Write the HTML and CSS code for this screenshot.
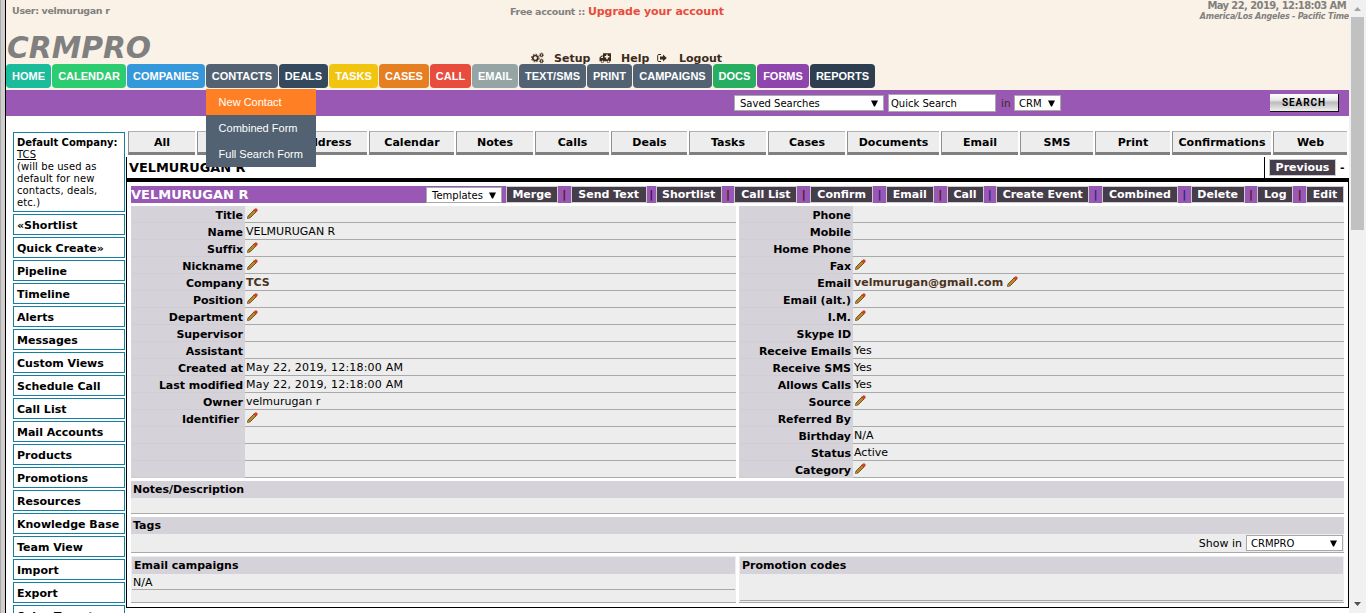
FILE: index.html
```html
<!DOCTYPE html>
<html lang="en">
<head>
<meta charset="utf-8">
<title>CRMPRO</title>
<link rel="stylesheet" href="styles.css">
</head>
<body>
<svg width="0" height="0" class="defs">
  <symbol id="pencil" viewBox="0 0 11 11">
    <path d="M.6 10.4 1.2 7.8 7.2 1.8 9.2 3.8 3.2 9.8Z" fill="#b8892b" stroke="#5f3a10" stroke-width=".8"/>
    <path d="M.6 10.4 1.1 8.4 2.6 9.9Z" fill="#e9cf9d" stroke="#5f3a10" stroke-width=".4"/>
    <path d="M6.9 2 8 .9Q9 .1 9.9 1 10.8 2 10.1 3L9 4.1Z" fill="#f03a1c" stroke="#a02412" stroke-width=".4"/>
  </symbol>
  <symbol id="caret" viewBox="0 0 8 8"><path d="M0 .5H8L4.6 7.5H3.4Z"/></symbol>
</svg>
<div class="page">
  <div class="edge"></div>
  <div class="content">
    <header class="header">
      <div class="topline">
        <div class="user">User: velmurugan r</div>
        <div class="account">Free account :: <a class="upgrade">Upgrade your account</a></div>
        <div class="clock"><div class="date">May 22, 2019, 12:18:03 AM</div><div class="zone">America/Los Angeles - Pacific Time</div></div>
      </div>
      <div class="brand">
        <div class="logo">CRMPRO</div>
        <div class="tools">
          <svg class="ic" width="13" height="12" viewBox="0 0 13 12"><g fill="none" stroke="#3d2b1c"><circle cx="4.3" cy="6" r="2.5" stroke-width="1.7"/><circle cx="4.3" cy="6" r="3.8" stroke-width="1" stroke-dasharray="1.6 1.38"/><circle cx="10.5" cy="3" r="1.3" stroke-width="1.1"/><circle cx="10.5" cy="9" r="1.3" stroke-width="1.1"/><circle cx="10.5" cy="3" r="2.1" stroke-width=".6" stroke-dasharray=".9 .75"/><circle cx="10.5" cy="9" r="2.1" stroke-width=".6" stroke-dasharray=".9 .75"/></g></svg>
          <a class="t1">Setup</a>
          <svg class="ic" width="12" height="12" viewBox="0 0 12 12"><path fill="#3d2b1c" fill-rule="evenodd" d="M4 1.2H12V9.3H11A1.6 1.6 0 0 1 7.8 9.3H5A1.6 1.6 0 0 1 1.8 9.3H.5V5.6L2.6 3.4H4ZM1.6 6H4V4.4H3ZM7.2 2.4V4H5.7V5.6H7.2V7.2H8.8V5.6H10.4V4H8.8V2.4ZM3.4 8.4A.9.9 0 1 0 3.5 8.4ZM9.4 8.4A.9.9 0 1 0 9.5 8.4Z"/></svg>
          <a class="t2">Help</a>
          <svg class="ic" width="10" height="12" viewBox="0 0 10 12"><path fill="none" stroke="#3d2b1c" d="M4 2.5H1.8Q.7 2.5.7 3.6V8.4Q.7 9.5 1.8 9.5H4"/><path fill="#3d2b1c" d="M3 4.6H6V2.4L9.8 6 6 9.6V7.4H3Z"/></svg>
          <a class="t3">Logout</a>
        </div>
      </div>
      <nav class="nav">
        <div class="n-home">HOME</div><div class="n-calendar">CALENDAR</div><div class="n-companies">COMPANIES</div>
        <div class="n-contacts">CONTACTS
          <div class="dropdown"><a class="active">New Contact</a><a>Combined Form</a><a>Full Search Form</a></div>
        </div>
        <div class="n-deals">DEALS</div><div class="n-tasks">TASKS</div><div class="n-cases">CASES</div><div class="n-call">CALL</div><div class="n-email">EMAIL</div><div class="n-text">TEXT/SMS</div><div class="n-print">PRINT</div><div class="n-campaigns">CAMPAIGNS</div><div class="n-docs">DOCS</div><div class="n-forms">FORMS</div><div class="n-reports">REPORTS</div>
      </nav>
    </header>
    <div class="searchbar">
      <div class="select saved">Saved Searches<svg class="caret"><use href="#caret"/></svg></div>
      <div class="quick">Quick Search</div>
      <span class="in">in</span>
      <div class="select crm">CRM<svg class="caret"><use href="#caret"/></svg></div>
      <div class="search">SEARCH</div>
    </div>
    <div class="columns">
      <aside class="side">
        <div class="company"><b>Default Company:</b><br><u>TCS</u><br>(will be used as default for new contacts, deals, etc.)</div>
        <a>«Shortlist</a><a>Quick Create»</a><a>Pipeline</a><a>Timeline</a><a>Alerts</a><a>Messages</a><a>Custom Views</a><a>Schedule Call</a><a>Call List</a><a>Mail Accounts</a><a>Products</a><a>Promotions</a><a>Resources</a><a>Knowledge Base</a><a>Team View</a><a>Import</a><a>Export</a><a>Sales Targets</a>
      </aside>
      <main class="main">
        <div class="tabs">
          <a>All</a><a></a><a>Address</a><a>Calendar</a><a>Notes</a><a>Calls</a><a>Deals</a><a>Tasks</a><a>Cases</a><a>Documents</a><a>Email</a><a>SMS</a><a>Print</a><a>Confirmations</a><a>Web</a>
        </div>
        <div class="titlebar"><span class="title">VELMURUGAN R</span><div class="pager"><a class="prev">Previous</a><b>-</b></div></div>
        <section class="record">
          <div class="actions">
            <span class="name">VELMURUGAN R</span>
            <div class="select templates">Templates<svg class="caret"><use href="#caret"/></svg></div>
            <a class="b1">Merge</a><i>|</i><a class="b2">Send Text</a><i class="narrow">|</i><a class="b3">Shortlist</a><i>|</i><a class="b4">Call List</a><i>|</i><a class="b5">Confirm</a><i class="blue">|</i><a class="b6">Email</a><i>|</i><a class="b7">Call</a><i class="blue">|</i><a class="b8">Create Event</a><i class="blue">|</i><a class="b9">Combined</a><i class="blue">|</i><a class="b10">Delete</a><i>|</i><a class="b11">Log</a><i>|</i><a class="b12">Edit</a>
          </div>
          <div class="fields">
            <dl>
              <dt>Title</dt><dd><svg class="pen"><use href="#pencil"/></svg></dd>
              <dt>Name</dt><dd>VELMURUGAN R</dd>
              <dt>Suffix</dt><dd><svg class="pen"><use href="#pencil"/></svg></dd>
              <dt>Nickname</dt><dd><svg class="pen"><use href="#pencil"/></svg></dd>
              <dt>Company</dt><dd><a>TCS</a></dd>
              <dt>Position</dt><dd><svg class="pen"><use href="#pencil"/></svg></dd>
              <dt>Department</dt><dd><svg class="pen"><use href="#pencil"/></svg></dd>
              <dt>Supervisor</dt><dd></dd>
              <dt>Assistant</dt><dd></dd>
              <dt>Created at</dt><dd class="when">May 22, 2019, 12:18:00 AM</dd>
              <dt>Last modified</dt><dd class="when">May 22, 2019, 12:18:00 AM</dd>
              <dt>Owner</dt><dd>velmurugan r</dd>
              <dt>Identifier&nbsp;</dt><dd><svg class="pen"><use href="#pencil"/></svg></dd>
              <dt></dt><dd></dd>
              <dt></dt><dd></dd>
              <dt></dt><dd></dd>
            </dl>
            <dl>
              <dt>Phone</dt><dd></dd>
              <dt>Mobile</dt><dd></dd>
              <dt>Home Phone</dt><dd></dd>
              <dt>Fax</dt><dd><svg class="pen"><use href="#pencil"/></svg></dd>
              <dt>Email</dt><dd><a>velmurugan@gmail.com</a><svg class="pen after"><use href="#pencil"/></svg></dd>
              <dt>Email (alt.)</dt><dd><svg class="pen"><use href="#pencil"/></svg></dd>
              <dt>I.M.</dt><dd><svg class="pen"><use href="#pencil"/></svg></dd>
              <dt>Skype ID</dt><dd></dd>
              <dt>Receive Emails</dt><dd>Yes</dd>
              <dt>Receive SMS</dt><dd>Yes</dd>
              <dt>Allows Calls</dt><dd>Yes</dd>
              <dt>Source</dt><dd><svg class="pen"><use href="#pencil"/></svg></dd>
              <dt>Referred By</dt><dd></dd>
              <dt>Birthday</dt><dd>N/A</dd>
              <dt>Status</dt><dd>Active</dd>
              <dt>Category</dt><dd><svg class="pen"><use href="#pencil"/></svg></dd>
            </dl>
          </div>
          <div class="block"><h3>Notes/Description</h3><div class="body notes"></div></div>
          <div class="block"><h3>Tags</h3><div class="body tags"><span>Show in</span><div class="select showin">CRMPRO<svg class="caret"><use href="#caret"/></svg></div></div></div>
          <div class="pair">
            <div class="box"><h3>Email campaigns</h3><div class="row">N/A</div></div>
            <div class="box"><h3>Promotion codes</h3><div class="row tall"></div></div>
          </div>
        </section>
      </main>
    </div>
  </div>
  <div class="scrollbar">
    <svg width="7" height="4" viewBox="0 0 7 4"><path d="M0 4 3.5 0 7 4Z" fill="#a3a3a3"/></svg>
    <div class="thumb"></div>
    <svg class="down" width="7" height="4" viewBox="0 0 7 4"><path d="M0 0 3.5 4 7 0Z" fill="#505050"/></svg>
  </div>
</div>
</body>
</html>
```
FILE: styles.css
```css
* { box-sizing: border-box; }
body { margin: 0; background: #fff; font: 11px/13px Verdana, "DejaVu Sans", sans-serif; color: #000; overflow: hidden; }
.defs { display: none; }
.page { display: flex; width: 1366px; height: 613px; overflow: hidden; }
.edge { width: 6px; flex: none; background: #d0cdce; border-left: 1px solid #a9a9a9; border-right: 1px solid #000; }
.content { width: 1343px; flex: none; }

/* Header */
.header { height: 90px; background: #faf2e6; }
.topline { display: flex; height: 24px; font-weight: bold; color: #808080; white-space: nowrap; }
.user { width: 504px; padding: 4px 0 0 6px; font-size: 9.5px; letter-spacing: -.33px; }
.account { width: 400px; padding-top: 5px; font-size: 9.5px; letter-spacing: -.33px; }
.upgrade { font-size: 11px; color: #e74c3c; letter-spacing: -.08px; }
.clock { margin-left: auto; text-align: right; }
.date { padding-right: 3px; font-size: 10px; line-height: 12px; letter-spacing: -.6px; }
.zone { font-size: 8px; font-style: italic; line-height: 9px; letter-spacing: -.22px; }
.brand { display: flex; height: 40px; }
.logo { width: 525px; padding-left: 1px; font: italic bold 29.7px/47px Verdana, "DejaVu Sans", sans-serif; color: #808080; }
.tools { display: flex; align-items: flex-start; padding-top: 28px; font-weight: bold; color: #3d2b1c; }
.tools a { line-height: 13px; }
.tools .ic { flex: none; }
.t1 { width: 45px; margin-left: 10px; }
.t2 { width: 36px; margin-left: 10px; }
.t3 { margin-left: 12px; }
.nav { display: flex; gap: 1px; height: 24px; font: bold 11px/25px "Liberation Sans", Arial, sans-serif; color: #fff; text-align: center; }
.nav > div { height: 24px; border-radius: 4px; flex: none; }
.nav .n-home { width: 45px; background: #1abc9c; }
.nav .n-calendar { width: 74px; background: #2ecc71; }
.nav .n-companies { width: 78px; background: #3498db; }
.nav .n-contacts { width: 72px; background: #526273; position: relative; }
.nav .n-deals { width: 49px; background: #34495e; }
.nav .n-tasks { width: 49px; background: #f1c40f; }
.nav .n-cases { width: 50px; background: #e67e22; }
.nav .n-call { width: 41px; background: #e74c3c; }
.nav .n-email { width: 46px; background: #95a5a6; }
.nav .n-text { width: 67px; background: #526273; }
.nav .n-print { width: 45px; background: #526273; }
.nav .n-campaigns { width: 79px; background: #526273; }
.nav .n-docs { width: 43px; background: #27ae60; }
.nav .n-forms { width: 52px; background: #8e44ad; }
.nav .n-reports { width: 65px; background: #2c3e50; }
.dropdown { position: absolute; left: 0; top: 25px; z-index: 5; width: 110px; background: #526273; font-weight: normal; text-align: left; }
.dropdown a { display: block; height: 26px; padding-left: 12.6px; line-height: 27px; }
.dropdown .active { background: #ff7f24; }

/* Search bar */
.searchbar { display: flex; align-items: center; height: 26px; padding-left: 728px; background: #9858b4; font-size: 10px; }
.select { display: flex; align-items: center; justify-content: space-between; height: 16px; padding: 1px 5px 0; background: #fff; border: 1px solid #a9a9a9; font-size: 10px; line-height: 13px; }
.caret { width: 7px; height: 7px; flex: none; margin-top: -1px; }
.saved { width: 150px; }
.quick { width: 108px; height: 18px; margin-left: 4px; padding: 3px 2px 0; background: #fff; border: 1px solid #a9a9a9; line-height: 12px; }
.in { width: 18px; padding-left: 5px; font-size: 10.5px; color: #3d2b1c; }
.crm { width: 47px; padding-left: 4px; }
.search { width: 69px; height: 18px; margin-left: 209px; border: solid #111; border-width: 0 1px 1px 0; background: linear-gradient(#fff, #e9e9e9 35%, #bdbdbd 50%, #efefef); font: bold 10px/18px Roboto, sans-serif; letter-spacing: .9px; text-align: center; }

/* Body columns */
.columns { display: flex; }
.side { display: flex; flex-direction: column; gap: 2px; width: 120px; padding: 16px 0 0 7px; }
.side > * { width: 112px; border: 1px solid #157ea5; padding-left: 3px; }
.side a { height: 21px; flex: none; font-weight: bold; line-height: 21px; white-space: nowrap; }
.side .company { height: 80px; padding: 4px 6px 0 3px; font-size: 10px; line-height: 12px; letter-spacing: .1px; }
.company b { letter-spacing: -.05px; white-space: nowrap; }
.main { width: 1223px; padding-top: 15px; }
.tabs { display: grid; grid-template-columns: 67px 86px 82px 85px 77px 74px 76px 77px 77px 92px 77px 73px 75px 99px 74px; column-gap: 2px; padding-left: 2px; height: 24px; font-weight: bold; text-align: center; line-height: 21px; }
.tabs a { height: 24px; background: #ededed; border: 1px solid #b0b0b0; border-left-color: #909090; border-right: 0; border-bottom: 3px solid #808080; }
.titlebar { display: flex; justify-content: space-between; height: 23px; margin-top: 2px; border-left: 1px solid #000; font-size: 12.9px; font-weight: bold; border-bottom: 0; }
.title { padding: 4px 0 0 2px; }
.pager { display: flex; width: 85px; height: 22px; padding: 2px 0 0 4px; border-left: 1px solid #000; font-size: 11px; line-height: 18px; font-weight: normal; }
.prev { width: 67px; height: 17px; margin-right: 4px; background: #453d4a; border: 1px solid #ccc; color: #fff; font-weight: bold; line-height: 15px; text-align: center; }
.record { height: 430px; margin-top: -2px; padding: 4px 4px; border: 1px solid #000; border-top-width: 4px; }
.actions { display: flex; height: 17px; background: #9858b4; font-weight: bold; line-height: 15px; color: #fff; }
.name { width: 295px; flex: none; font-size: 13px; line-height: 18px; }
.templates { width: 76px; flex: none; margin-right: 4px; color: #000; font-weight: normal; margin-top: 1px; }
.actions a { height: 17px; flex: none; background: #453d4a; border: 1px solid #ccc; text-align: center; line-height: 16px; white-space: nowrap; overflow: hidden; }
.actions i { flex: 1 1 0; color: #4f1616; font-style: normal; text-align: center; line-height: 17px; }
.actions .blue { color: #28287c; }
.actions .narrow { flex: 0 0 9px; color: #30104f; }
.b1 { width: 52px; } .b2 { width: 76px; } .b3 { width: 66px; } .b4 { width: 63px; } .b5 { width: 63px; } .b6 { width: 48px; }
.b7 { width: 37px; } .b8 { width: 93px; } .b9 { width: 76px; } .b10 { width: 54px; } .b11 { width: 36px; } .b12 { width: 38px; }

/* Fields */
.fields { display: grid; grid-template-columns: 605px 605px; column-gap: 3px; margin-top: 3px; }
dl { display: grid; grid-template-columns: 114px 491px; grid-auto-rows: 17px; margin: 0; }
dt { padding-right: 2px; background: #d5d2d9; border-bottom: 1px solid #cfcfd2; font-weight: bold; text-align: right; line-height: 19px; letter-spacing: -.04px; white-space: nowrap; }
dd { display: flex; margin: 0; padding-left: 1px; background: #ededed; border-bottom: 1px solid #a9a9a9; line-height: 17px; white-space: nowrap; }
dd a { font-weight: bold; color: #4a3320; }
.when { letter-spacing: .2px; }
.pen { width: 11px; height: 11px; margin: 2px 0 0 1px; }
.after { margin-left: 4px; }

/* Lower blocks */
.block { margin-top: 3px; }
h3 { margin: 0; height: 17px; padding-left: 2px; background: #d5d2d9; font-size: 11px; line-height: 18px; }
.body { background: #ededed; border-bottom: 1px solid #a9a9a9; }
.notes { height: 16px; }
.tags { display: flex; align-items: flex-start; justify-content: flex-end; height: 19px; padding: 1px 1px 0 0; line-height: 17px; }
.showin { width: 97px; margin-left: 4px; padding-left: 4px; }
.pair { display: grid; grid-template-columns: 605px 605px; column-gap: 3px; margin-top: 3px; }
.box { height: 47px; padding: 1px 1px 0; background: #ededed; border-bottom: 1px solid #a9a9a9; }
.row { height: 16px; border-bottom: 1px solid #a9a9a9; padding-left: 1px; line-height: 17px; }
.tall { height: 27px; }

/* Scrollbar */
.scrollbar { display: flex; flex-direction: column; align-items: center; width: 17px; flex: none; padding-top: 7px; background: #f1f1f1; }
.thumb { width: 13px; height: 213px; margin-top: 6px; background: #c1c1c1; }
.down { margin: auto 0 7px; }
```
